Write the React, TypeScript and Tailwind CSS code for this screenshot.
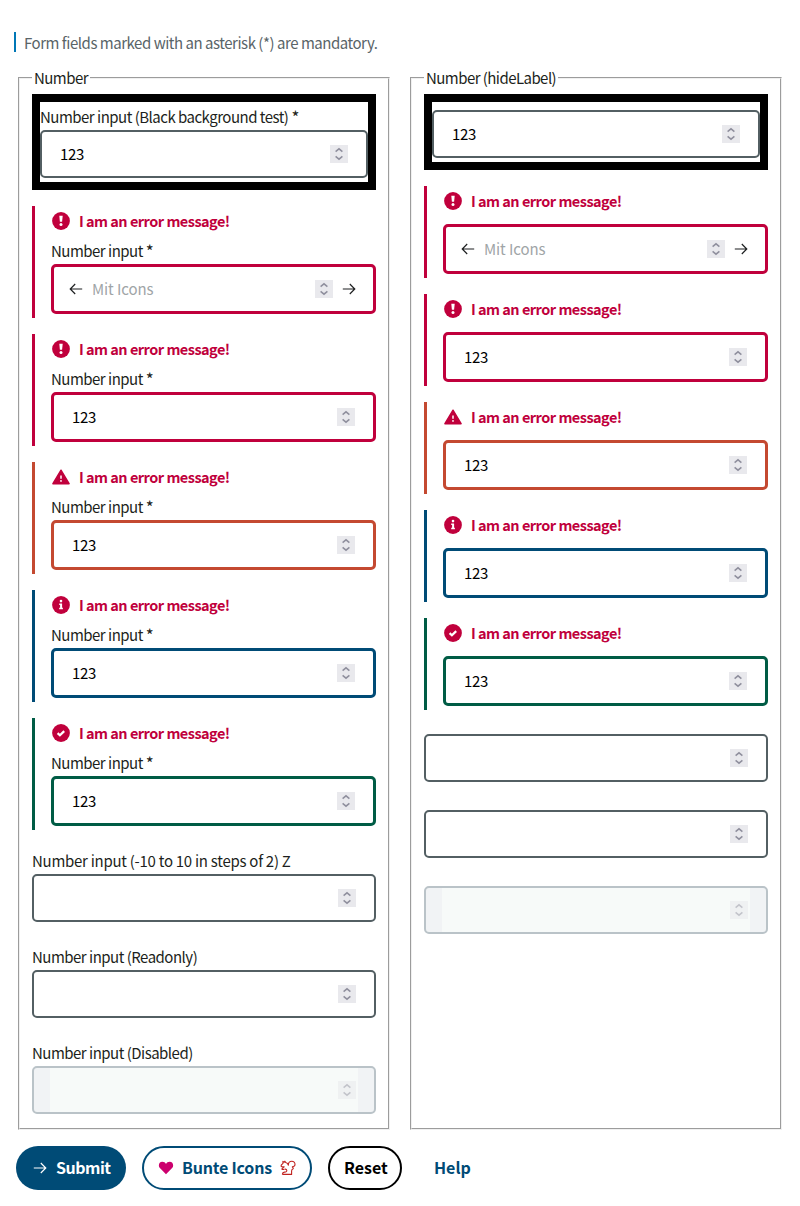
import type { ReactNode } from 'react';

type Kind = 'error' | 'warning' | 'info' | 'success';

const tone: Record<Kind, string> = {
  error: 'border-[#c0003c]',
  warning: 'border-[#c44931]',
  info: 'border-[#004b76]',
  success: 'border-[#005c45]',
};

function StatusIcon({ kind }: { kind: Kind }) {
  if (kind === 'warning') {
    return (
      <svg width="18" height="18" viewBox="0 0 18 18" className="block shrink-0">
        <path d="M9 2.2 L17.100 15.700 H.9 Z" fill="#c0003c" stroke="#c0003c" strokeWidth="1.4" strokeLinejoin="round" />
        <path d="M9 7.400v3.400" stroke="#fff" strokeWidth="1.5" />
        <circle cx="9" cy="12.900" r="0.9" fill="#fff" />
      </svg>
    );
  }
  return (
    <svg width="18" height="18" viewBox="0 0 18 18" className="block shrink-0">
      <circle cx="9" cy="9" r="8.9" fill="#c0003c" />
      {kind === 'error' && (
        <>
          <path d="M7.3 3.8h3.4l-.6 6H7.900z" fill="#fff" />
          <circle cx="9" cy="12.4" r="1.500" fill="#fff" />
        </>
      )}
      {kind === 'info' && (
        <>
          <circle cx="9" cy="5.1" r="1.3" fill="#fff" />
          <path d="M7.2 7.6h2.9v4.2h.8v1.4H7.200v-1.4h.9V9h-.9z" fill="#fff" />
        </>
      )}
      {kind === 'success' && <path d="M5.6 9.1l2.3 2.2 4.3-4.2" fill="none" stroke="#fff" strokeWidth="2.2" />}
    </svg>
  );
}

function Arrow({ left = false, className = '' }: { left?: boolean; className?: string }) {
  return (
    <svg width="14" height="14" viewBox="0 0 14 14" className={`block shrink-0 ${className}`} fill="none" stroke="currentColor" strokeWidth="1.15">
      {left ? <path d="M13.2 7H1.2M6.2 2L1.2 7l5 5" /> : <path d="M.8 7h12M7.8 2l5 5-5 5" />}
    </svg>
  );
}

function Spinner({ disabled = false }: { disabled?: boolean }) {
  return (
    <svg width="18" height="18" viewBox="0 0 18 18" className={`block shrink-0 ${disabled ? 'opacity-50' : ''}`}>
      <rect width="18" height="18" fill="#e9e9ed" />
      <path d="M5.6 6.6L9 3.8l3.4 2.8M5.6 11.4L9 14.2l3.4-2.8" fill="none" stroke="#8f8f9d" strokeWidth="1.5" />
    </svg>
  );
}

function Box({ kind, value, icons, disabled }: { kind?: Kind; value?: string; icons?: boolean; disabled?: boolean }) {
  if (disabled) {
    return (
      <div className="h-12 rounded-[5px] border-2 border-[#bac3c8] bg-[#f1f3f5] px-4">
        <div className="flex h-full items-center justify-end bg-[#f7faf9] pr-0.5">
          <Spinner disabled />
        </div>
      </div>
    );
  }
  return (
    <div className={`flex items-center rounded-[5px] bg-white ${kind ? `h-[50px] border-3 ${tone[kind]}` : 'h-12 border-2 border-[#535f63]'} ${icons ? 'pr-[17px] pl-[15px]' : 'px-[18px]'}`}>
      {icons && <Arrow left className="mr-[9px]" />}
      {icons ? (
        <span className="flex-1 tracking-[-0.1px] text-[#a0a5a7]">Mit Icons</span>
      ) : (
        <span className="flex-1 tracking-[-0.3px] text-black">{value}</span>
      )}
      <Spinner />
      {icons && <Arrow className="ml-[9px]" />}
    </div>
  );
}

function Label({ children, required }: { children: ReactNode; required?: boolean }) {
  return (
    <div className="flex">
      <span>{children}</span>
      {required && <span className="ml-[3px] text-[17px]">*</span>}
    </div>
  );
}

type FieldProps = {
  kind?: Kind;
  label?: string;
  labelClass?: string;
  required?: boolean;
  value?: string;
  icons?: boolean;
  disabled?: boolean;
};

function Field({ kind, label, labelClass = 'tracking-[-0.51px]', required, ...box }: FieldProps) {
  if (!kind) {
    return (
      <div className="pb-1">
        {label ? (
          <div className={`flex h-7 items-center pt-px ${labelClass}`}>
            <Label required={required}>{label}</Label>
          </div>
        ) : (
          <div className="h-2" />
        )}
        <Box {...box} />
      </div>
    );
  }
  return (
    <div className={`border-l-3 pb-1 pl-4 ${tone[kind]}`}>
      <div className={`flex items-start ${label ? 'h-8' : 'h-[38px]'}`}>
        <div className="flex h-[30px] items-center gap-[9px] pl-px">
          <StatusIcon kind={kind} />
          <span className="text-[14.5px] font-bold tracking-[-0.52px] text-[#c0003c]">I am an error message!</span>
        </div>
      </div>
      {label && (
        <div className={`flex h-[26px] items-center ${labelClass}`}>
          <Label required={required}>{label}</Label>
        </div>
      )}
      <Box kind={kind} {...box} />
    </div>
  );
}

const statuses: FieldProps[] = [
  { kind: 'error', icons: true },
  { kind: 'error', value: '123' },
  { kind: 'warning', value: '123' },
  { kind: 'info', value: '123' },
  { kind: 'success', value: '123' },
];

function Group({ title, hideLabel }: { title: string; hideLabel?: boolean }) {
  const label = (text: string) => (hideLabel ? undefined : text);
  return (
    <fieldset className="min-w-0 flex-1 border-2 border-[#f0f0f0] px-3 pt-[5px] pb-2.5 [border-style:groove]">
      <legend className="h-[22px] px-0.5 tracking-[-0.55px]">{title}</legend>
      <div className="flex flex-col gap-4">
        <div className="border-8 border-black">
          <Field label={label('Number input (Black background test)')} required value="123" />
        </div>
        {statuses.map((s, i) => (
          <Field key={i} {...s} label={label('Number input')} required />
        ))}
        <Field label={label('Number input (-10 to 10 in steps of 2) Z')} labelClass="tracking-[-0.27px]" />
        <Field label={label('Number input (Readonly)')} />
        <Field label={label('Number input (Disabled)')} disabled />
      </div>
    </fieldset>
  );
}

function Heart() {
  return (
    <svg width="16" height="14" viewBox="0 0 16 14" className="block">
      <path d="M8 13.2L1.9 7.1C-.2 4.8 1 .8 4.3.8 6 .8 7.3 1.6 8 3 8.7 1.6 10 .8 11.7.8c3.3 0 4.5 4 2.4 6.3z" fill="#cc006e" />
    </svg>
  );
}

function Squirrel() {
  return (
    <svg width="16" height="16" viewBox="0 0 16 16" className="block" fill="none" stroke="#c0221f" strokeWidth="1.1" strokeLinejoin="round">
      <path d="M2.300 14.400h9.300v-3.500c0-1 .4-1.500 1.200-1.900.8-.5.6-1.300-.1-1.600-.7-.4-.3-1 .4-.9 1.100.1 1.900-.8 1.900-2.200C15 2.400 13.700 1.200 11.800 1.200S8.300 2.300 8.300 5.200C8 3.700 7 2.700 5.700 2.500L4.900 1.200l-.7 1.100L2.900 1.400l.1 1.900L1.200 5.100v1.400c1 .5 2 .4 3 .4L2.100 8.400v1h2.300M4.800 9.200c1.500-.2 2.300.7 1.900 1.900-.3.8-1.100 1.100-2.300 1-1 0-1.900.6-2.100 2.200" />
    </svg>
  );
}

export default function App() {
  return (
    <div className="min-h-[1206px] bg-white font-['Noto_Sans_CJK_SC','Noto_Sans',sans-serif] text-[15px] leading-[22px] text-[#1d1f20]">
      <div className="pt-8 pl-3.5">
        <div className="flex h-5 items-center border-l-2 border-[#0077b6] pt-0.5 pl-2 tracking-[-0.47px] text-[#596468]">
          Form fields marked with an asterisk (*) are mandatory.
        </div>
      </div>
      <div className="flex gap-5 pt-[15px] pr-[18px] pl-[18px]">
        <Group title="Number" />
        <Group title="Number (hideLabel)" hideLabel />
      </div>
      <div className="flex gap-4 pt-4 pl-4 text-[16px] font-bold">
        <button className="flex h-11 w-[110px] items-center rounded-full bg-[#004b76] pl-[17px] text-white">
          <Arrow className="mr-[9px]" />
          <span className="pb-0.5 tracking-[-0.5px]">Submit</span>
        </button>
        <button className="flex h-11 w-[170px] items-center rounded-full border-2 border-[#004b76] pl-3.5 text-[#004b76]">
          <Heart />
          <span className="ml-2 w-[98px] pb-0.5 text-left tracking-[-0.2px]">Bunte Icons</span>
          <Squirrel />
        </button>
        <button className="flex h-11 w-[74px] items-center rounded-full border-2 border-black pb-0.5 pl-3.5 text-black">Reset</button>
        <button className="flex h-11 items-center pb-0.5 pl-4 text-[#004b76]">Help</button>
      </div>
    </div>
  );
}
